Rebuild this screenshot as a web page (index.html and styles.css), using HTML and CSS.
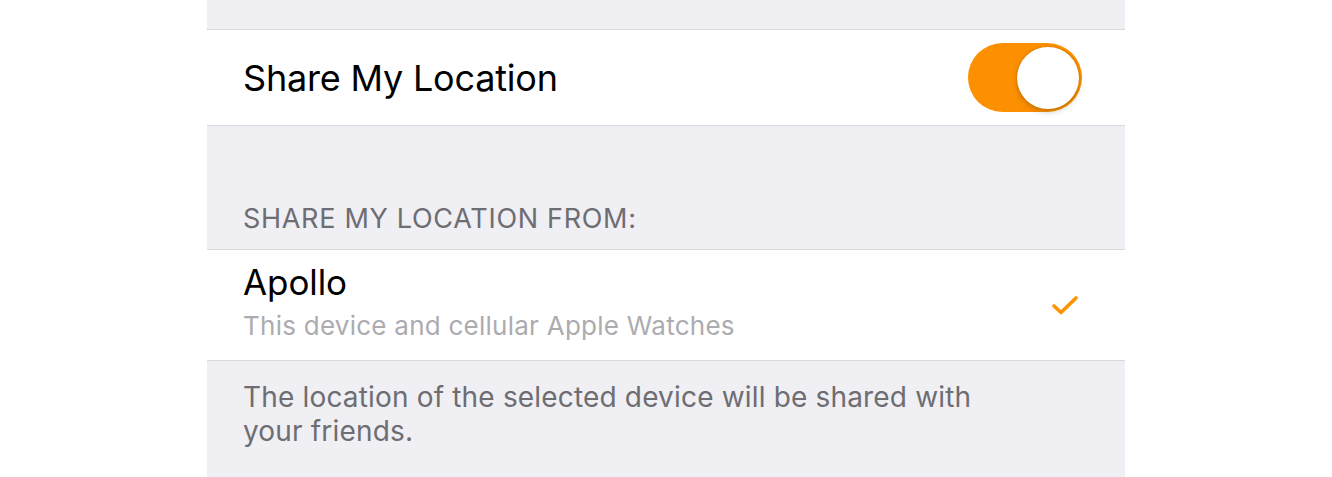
FILE: index.html
```html
<!DOCTYPE html>
<html>
<head>
<meta charset="utf-8">
<link rel="stylesheet" href="styles.css">
</head>
<body>
<div class="page">
  <div class="top-gap"></div>
  <div class="group">
    <div class="row row-toggle">
      <span class="label">Share My Location</span>
      <span class="toggle"><span class="knob"></span></span>
    </div>
  </div>
  <div class="section-header">SHARE MY LOCATION FROM:</div>
  <div class="group">
    <div class="row row-device">
      <div class="device-text">
        <div class="device-name">Apollo</div>
        <div class="device-sub">This device and cellular Apple Watches</div>
      </div>
      <svg class="check" width="28" height="22" viewBox="0 0 28 22">
        <path d="M3 12 L10 18.5 L25 4" fill="none" stroke="#fd9400" stroke-width="3.6" stroke-linecap="round" stroke-linejoin="round"/>
      </svg>
    </div>
  </div>
  <div class="footer">The location of the selected device will be shared with<br>your friends.</div>
</div>
</body>
</html>
```

FILE: styles.css
```css
html, body {
  margin: 0;
  padding: 0;
  background: #ffffff;
}
.page {
  width: 918px;
  height: 477px;
  margin: 0 auto;
  background: #efeff4;
  font-family: "Inter", "Liberation Sans", sans-serif;
  overflow: hidden;
}
.top-gap {
  height: 29px;
}
.group {
  background: #ffffff;
  border-top: 1px solid #d9d9dd;
  border-bottom: 1px solid #d9d9dd;
}
.row {
  display: flex;
  align-items: center;
  justify-content: space-between;
  padding: 0 43px 0 36px;
}
.row-toggle {
  height: 95px;
}
.label {
  font-size: 36px;
  color: #000;
  letter-spacing: -0.2px;
}
.toggle {
  width: 114px;
  height: 69px;
  border-radius: 35px;
  background: #fd9000;
  display: flex;
  align-items: center;
  justify-content: flex-end;
  padding-right: 3px;
  box-sizing: border-box;
}
.knob {
  width: 62px;
  height: 62px;
  border-radius: 50%;
  background: #fff;
  box-shadow: 0 3px 6px rgba(0,0,0,0.18), 0 0 0 1.5px #f08a00;
}
.section-header {
  height: 123px;
  box-sizing: border-box;
  padding: 0 0 14px 36px;
  display: flex;
  align-items: flex-end;
  font-size: 27px;
  line-height: 32px;
  color: #6d6d72;
  letter-spacing: 0.7px;
}
.row-device {
  height: 110px;
  padding-right: 46px;
}
.device-text {
  align-self: flex-start;
  padding-top: 12px;
  display: flex;
  flex-direction: column;
}
.device-name {
  font-size: 35px;
  color: #000;
  line-height: 40px;
  letter-spacing: -0.1px;
}
.device-sub {
  font-size: 26px;
  color: #acacb0;
  line-height: 32px;
  margin-top: 8px;
  letter-spacing: 0.25px;
}
.footer {
  padding: 19px 0 0 36px;
  font-size: 28px;
  line-height: 34px;
  color: #6d6d72;
  letter-spacing: 0.17px;
}
```
